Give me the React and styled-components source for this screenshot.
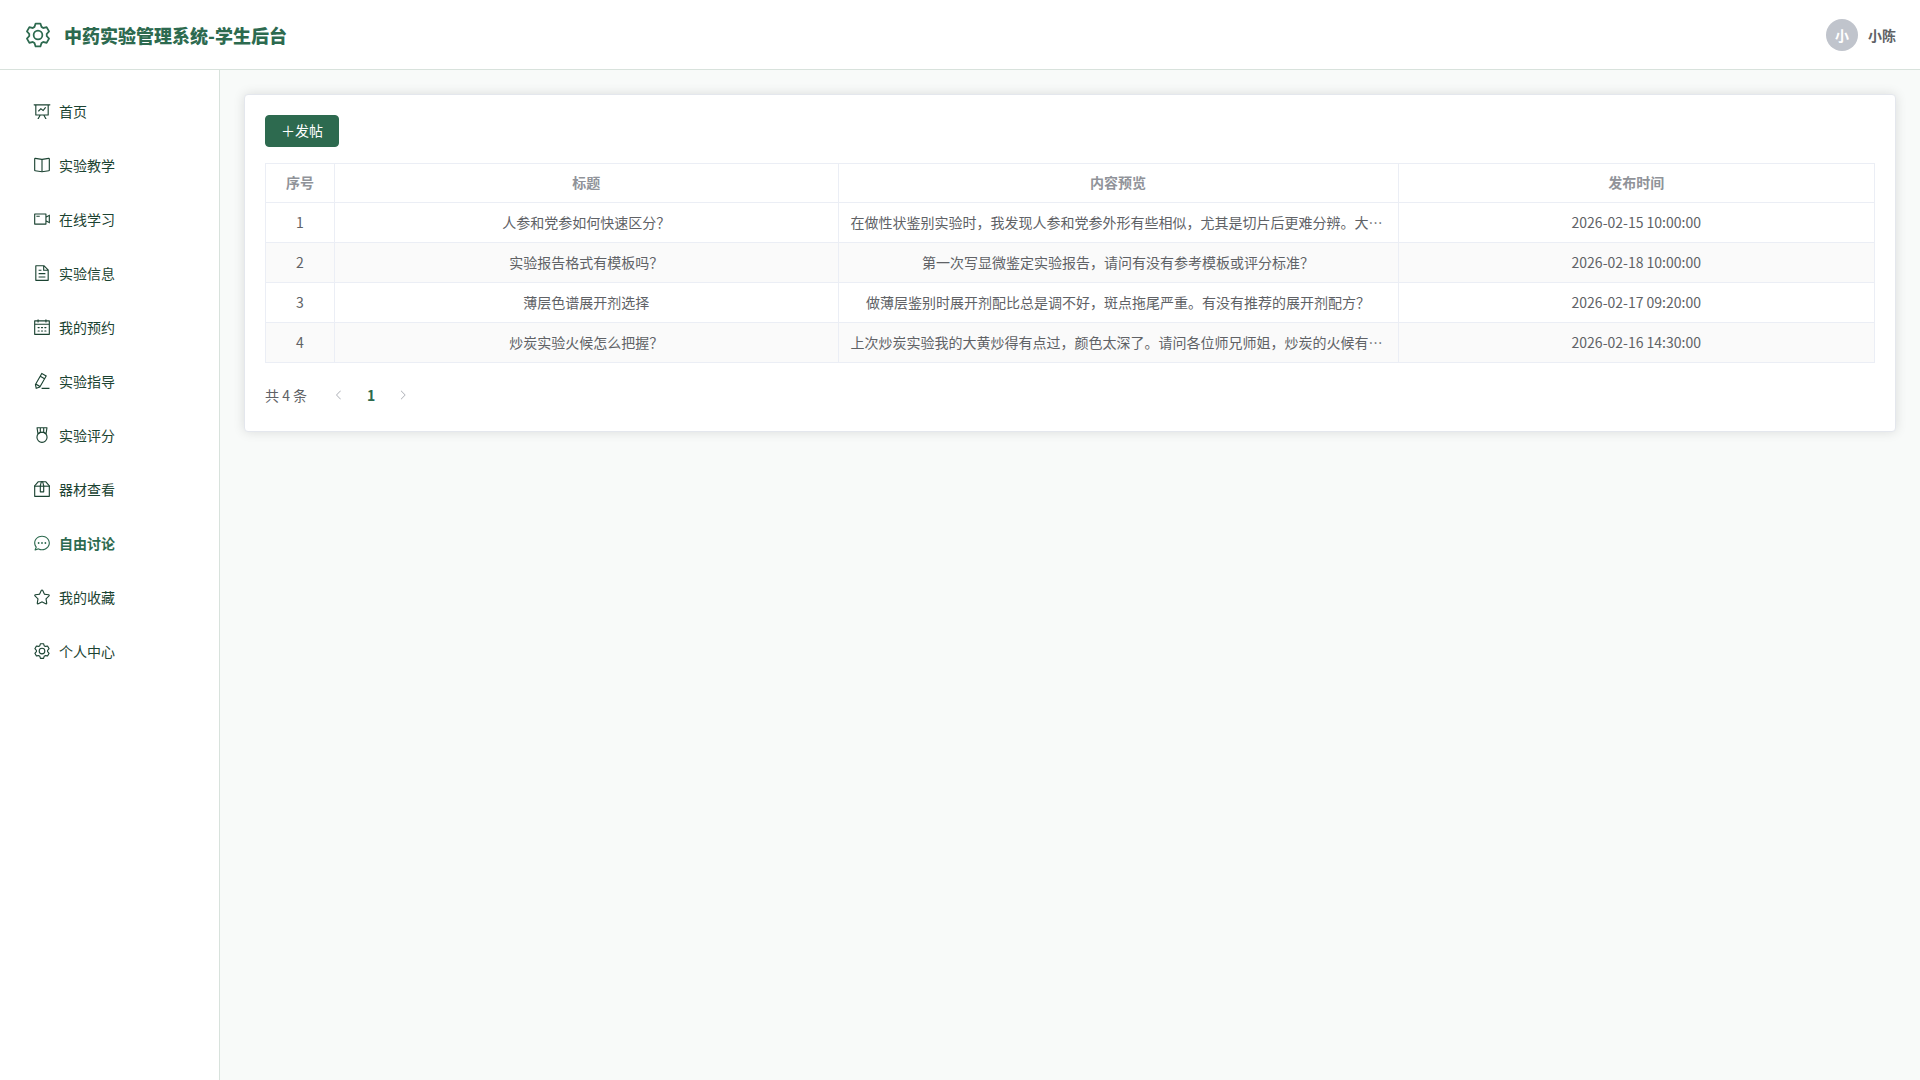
import React from 'react';
import styled, { createGlobalStyle } from 'styled-components';

const GlobalStyle = createGlobalStyle`
  *, *::before, *::after { box-sizing: border-box; }
  body {
    margin: 0;
    background: #f8faf9;
    color: #606266;
    font-family: "Noto Sans CJK SC", sans-serif;
    font-size: 14px;
  }
`;

const ICONS = {
  setting: [
    'M600.704 64a32 32 0 0 1 30.464 22.208l35.2 109.376c14.784 7.232 28.928 15.36 42.432 24.512l112.384-24.192a32 32 0 0 1 34.432 15.36L944.32 364.8a32 32 0 0 1-4.032 37.504l-77.12 85.12a357.12 357.12 0 0 1 0 49.024l77.12 85.248a32 32 0 0 1 4.032 37.504l-88.704 153.6a32 32 0 0 1-34.432 15.296L708.8 803.904c-13.44 9.088-27.648 17.28-42.368 24.512l-35.264 109.376A32 32 0 0 1 600.704 960H423.296a32 32 0 0 1-30.464-22.208L357.696 828.48a351.616 351.616 0 0 1-42.56-24.64l-112.32 24.256a32 32 0 0 1-34.432-15.36L79.68 659.2a32 32 0 0 1 4.032-37.504l77.12-85.248a357.12 357.12 0 0 1 0-48.896l-77.12-85.248A32 32 0 0 1 79.68 364.8l88.704-153.6a32 32 0 0 1 34.432-15.296l112.32 24.256c13.568-9.152 27.776-17.408 42.56-24.64l35.2-109.312A32 32 0 0 1 423.232 64H600.64zm-23.424 64H446.72l-36.352 113.088-24.512 11.968a294.113 294.113 0 0 0-34.816 20.096l-22.656 15.36-116.224-25.088-65.28 113.152 79.68 88.192-1.92 27.136a293.12 293.12 0 0 0 0 40.192l1.92 27.136-79.808 88.192 65.344 113.152 116.224-25.024 22.656 15.296a294.113 294.113 0 0 0 34.816 20.096l24.512 11.968L446.72 896h130.688l36.48-113.152 24.448-11.904a288.282 288.282 0 0 0 34.752-20.096l22.592-15.296 116.288 25.024 65.28-113.152-79.744-88.192 1.92-27.136a293.12 293.12 0 0 0 0-40.256l-1.92-27.136 79.808-88.128-65.344-113.152-116.288 24.96-22.592-15.232a287.616 287.616 0 0 0-34.752-20.096l-24.448-11.904L577.344 128zM512 320a192 192 0 1 1 0 384 192 192 0 0 1 0-384m0 64a128 128 0 1 0 0 256 128 128 0 0 0 0-256',
  ],
  dataLine: [
    'M359.168 768H160a32 32 0 0 1-32-32V192H64a32 32 0 0 1 0-64h896a32 32 0 1 1 0 64h-64v544a32 32 0 0 1-32 32H665.216l110.848 192h-73.856L591.36 768H433.024L322.176 960H248.32zM832 192H192v512h640zM342.656 534.656a32 32 0 1 1-45.312-45.312L444.992 341.76l125.44 94.08L679.04 300.032a32 32 0 1 1 49.92 39.936L581.632 524.224 451.008 426.24 342.656 534.592z',
  ],
  reading: [
    'm512 863.36 384-54.848v-638.72L525.568 222.72a96 96 0 0 1-27.136 0L128 169.792v638.72zM137.024 106.432l370.432 52.928a32 32 0 0 0 9.088 0l370.432-52.928A64 64 0 0 1 960 169.792v638.72a64 64 0 0 1-54.976 63.36l-388.48 55.488a32 32 0 0 1-9.088 0l-388.48-55.488A64 64 0 0 1 64 808.512v-638.72a64 64 0 0 1 73.024-63.36z',
    'M480 192h64v704h-64z',
  ],
  video: [
    'M704 768V256H128v512zm64-416 192-96v512l-192-96v128a32 32 0 0 1-32 32H96a32 32 0 0 1-32-32V224a32 32 0 0 1 32-32h640a32 32 0 0 1 32 32zm0 71.552v176.896l128 64V359.552zM192 320h192v64H192z',
  ],
  document: [
    'M832 384H576V128H192v768h640zm-26.496-64L640 154.496V320zM160 64h480l256 256v608a32 32 0 0 1-32 32H160a32 32 0 0 1-32-32V96a32 32 0 0 1 32-32m160 448h384v64H320zm0-192h160v64H320zm0 384h384v64H320z',
  ],
  calendar: [
    'M128 384v512h768V192H768v32a32 32 0 1 1-64 0v-32H320v32a32 32 0 0 1-64 0v-32H128v128h768v64zm192-256h384V96a32 32 0 1 1 64 0v32h160a32 32 0 0 1 32 32v768a32 32 0 0 1-32 32H96a32 32 0 0 1-32-32V160a32 32 0 0 1 32-32h160V96a32 32 0 0 1 64 0zm-32 384h64a32 32 0 0 1 0 64h-64a32 32 0 0 1 0-64m0 192h64a32 32 0 1 1 0 64h-64a32 32 0 1 1 0-64m192-192h64a32 32 0 0 1 0 64h-64a32 32 0 0 1 0-64m0 192h64a32 32 0 1 1 0 64h-64a32 32 0 1 1 0-64m192-192h64a32 32 0 1 1 0 64h-64a32 32 0 1 1 0-64m0 192h64a32 32 0 1 1 0 64h-64a32 32 0 1 1 0-64',
  ],
  editPen: [
    'm199.04 672.64 193.984 112 224-387.968-193.92-112-224 388.032zm-23.872 60.16 32.896 148.288 144.896-45.696zM455.04 229.248l193.92 112 56.704-98.112-193.984-112-56.64 98.112zM104.32 708.8l384-665.024 304.768 175.936L409.152 884.8h.064l-248.448 78.336zm384 254.272v-64h448v64z',
  ],
  medal: [
    'M512 896a256 256 0 1 0 0-512 256 256 0 0 0 0 512m0 64a320 320 0 1 1 0-640 320 320 0 0 1 0 640',
    'M576 128H448v200a286.72 286.72 0 0 1 64-8c19.52 0 40.832 2.688 64 8zm64 0v219.648c24.448 9.088 50.56 20.416 78.4 33.92L757.44 128zm-256 0H266.624l39.04 253.568c27.84-13.504 53.888-24.832 78.336-33.92V128zM229.312 64h565.376a32 32 0 0 1 31.616 36.864L768 480c-113.792-64-199.104-96-256-96-56.896 0-142.208 32-256 96l-58.304-379.136A32 32 0 0 1 229.312 64',
  ],
  box: [
    'M317.056 128 128 344.064V896h768V344.064L706.944 128zm-14.528-64h418.944a32 32 0 0 1 24.064 10.88l206.528 236.096A32 32 0 0 1 960 332.032V928a32 32 0 0 1-32 32H96a32 32 0 0 1-32-32V332.032a32 32 0 0 1 7.936-21.12L278.4 75.008A32 32 0 0 1 302.528 64z',
    'M64 320h896v64H64z',
    'M448 327.872V640h128V327.872L526.08 128h-28.16zM448 64h128l64 256v352a32 32 0 0 1-32 32H416a32 32 0 0 1-32-32V320z',
  ],
  chat: [
    'm174.72 855.68 135.296-45.12 23.68 11.84C388.096 849.536 448.576 864 512 864c211.84 0 384-166.784 384-352S723.84 160 512 160 128 326.784 128 512c0 69.12 24.96 139.264 70.848 199.232l22.08 28.8-46.272 115.584zm-45.248 82.56A32 32 0 0 1 89.6 896l58.368-145.92C94.72 680.32 64 596.864 64 512 64 299.904 256 96 512 96s448 203.904 448 416-192 416-448 416a461.056 461.056 0 0 1-206.912-48.384l-175.616 58.56z',
    'M512 563.2a51.2 51.2 0 1 1 0-102.4 51.2 51.2 0 0 1 0 102.4m192 0a51.2 51.2 0 1 1 0-102.4 51.2 51.2 0 0 1 0 102.4m-384 0a51.2 51.2 0 1 1 0-102.4 51.2 51.2 0 0 1 0 102.4',
  ],
  star: [
    'm512 747.84 228.16 119.936a6.4 6.4 0 0 0 9.28-6.72l-43.52-254.08 184.512-179.904a6.4 6.4 0 0 0-3.52-10.88l-255.104-37.12L517.76 147.904a6.4 6.4 0 0 0-11.52 0L392.192 379.072l-255.104 37.12a6.4 6.4 0 0 0-3.52 10.88L318.08 606.976l-43.584 254.08a6.4 6.4 0 0 0 9.28 6.72zM313.6 924.48a70.4 70.4 0 0 1-102.144-74.24l37.888-220.928L88.96 472.96A70.4 70.4 0 0 1 128 352.896l221.76-32.256 99.2-200.96a70.4 70.4 0 0 1 126.208 0l99.2 200.96 221.824 32.256a70.4 70.4 0 0 1 39.04 120.064L774.72 629.376l37.888 220.928a70.4 70.4 0 0 1-102.144 74.24L512 820.096l-198.4 104.32z',
  ],
  arrowLeft: [
    'M609.408 149.376 277.76 489.6a32 32 0 0 0 0 44.672l331.648 340.352a29.12 29.12 0 0 0 41.728 0 30.592 30.592 0 0 0 0-42.752L339.264 511.936l311.872-319.872a30.592 30.592 0 0 0 0-42.688 29.12 29.12 0 0 0-41.728 0z',
  ],
  arrowRight: [
    'M340.864 149.312a30.592 30.592 0 0 0 0 42.752L652.736 512 340.864 831.872a30.592 30.592 0 0 0 0 42.752 29.12 29.12 0 0 0 41.728 0L714.24 534.336a32 32 0 0 0 0-44.672L382.592 149.376a29.12 29.12 0 0 0-41.728 0z',
  ],
};

const Svg = styled.svg`
  display: block;
  flex: none;
  fill: currentColor;
`;

function Icon({ name, size }) {
  return (
    <Svg viewBox="0 0 1024 1024" width={size} height={size} aria-hidden="true">
      {ICONS[name].map((d) => <path key={d} d={d} />)}
    </Svg>
  );
}

const Page = styled.div`
  display: flex;
  flex-direction: column;
  min-height: 100vh;
`;

const Header = styled.header`
  display: flex;
  align-items: center;
  justify-content: space-between;
  height: 70px;
  padding: 0 24px;
  background: #fff;
  border-bottom: 1px solid #d8e2dc;
`;

const Brand = styled.div`
  display: flex;
  align-items: center;
  gap: 12px;
  color: #2d6a4f;
`;

const BrandName = styled.h1`
  margin: 0;
  font-size: 18px;
  line-height: 26px;
  font-weight: 900;
`;

const User = styled.div`
  display: flex;
  align-items: center;
  gap: 10px;
  font-weight: 700;
`;

const Avatar = styled.span`
  display: flex;
  align-items: center;
  justify-content: center;
  width: 32px;
  height: 32px;
  border-radius: 50%;
  background: #c0c4cc;
  color: #fff;
`;

const Body = styled.div`
  display: flex;
  flex: 1;
`;

const Sidebar = styled.nav`
  flex: none;
  width: 220px;
  padding: 16px 12px;
  background: #fff;
  border-right: 1px solid #d8e2dc;
`;

const Menu = styled.ul`
  display: flex;
  flex-direction: column;
  gap: 4px;
  margin: 0;
  padding: 0;
  list-style: none;
`;

const MenuLink = styled.a`
  display: flex;
  align-items: center;
  gap: 8px;
  height: 50px;
  padding: 0 21px;
  color: ${(p) => (p.$active ? '#2d6a4f' : '#1b4332')};
  font-weight: ${(p) => (p.$active ? 700 : 400)};
  text-decoration: none;
`;

const Main = styled.main`
  flex: 1;
  min-width: 0;
  padding: 24px;
`;

const Card = styled.section`
  display: flex;
  flex-direction: column;
  align-items: flex-start;
  gap: 16px;
  padding: 20px;
  background: #fff;
  border: 1px solid #e4e7ed;
  border-radius: 4px;
  box-shadow: 0 0 12px rgba(0, 0, 0, 0.12);
`;

const PostButton = styled.button`
  height: 32px;
  padding: 0 15px 2px;
  border: 1px solid #2d6a4f;
  border-radius: 4px;
  background: #2d6a4f;
  color: #fff;
  font: inherit;
  line-height: 14px;
  cursor: pointer;
`;

const Table = styled.table`
  width: 100%;
  table-layout: fixed;
  border-collapse: separate;
  border-spacing: 0;
  border: 1px solid #ebeef5;
  border-width: 1px 0 0 1px;
`;

const Col = styled.col`
  width: ${(p) => p.$width};
`;

const cell = `
  border: 1px solid #ebeef5;
  border-width: 0 1px 1px 0;
  line-height: 23px;
  text-align: center;
  overflow: hidden;
  text-overflow: ellipsis;
  white-space: nowrap;
`;

const Th = styled.th`
  ${cell}
  padding: 7px 12px 8px;
  color: #909399;
  font-weight: 700;
`;

const Td = styled.td`
  ${cell}
  padding: 8px 12px;
`;

const Row = styled.tr`
  &:nth-child(even) { background: #fafafa; }
`;

const Pagination = styled.nav`
  display: flex;
  align-items: center;
`;

const Total = styled.span`
  margin-right: 16px;
`;

const PageButton = styled.button`
  display: flex;
  align-items: center;
  justify-content: center;
  min-width: 32px;
  height: 32px;
  padding: 0 4px;
  border: 0;
  background: transparent;
  color: ${(p) => (p.$current ? '#2d6a4f' : '#a8abb2')};
  font: inherit;
  font-weight: 700;
`;

const MENU = [
  ['首页', 'dataLine'],
  ['实验教学', 'reading'],
  ['在线学习', 'video'],
  ['实验信息', 'document'],
  ['我的预约', 'calendar'],
  ['实验指导', 'editPen'],
  ['实验评分', 'medal'],
  ['器材查看', 'box'],
  ['自由讨论', 'chat'],
  ['我的收藏', 'star'],
  ['个人中心', 'setting'],
];

const POSTS = [
  ['人参和党参如何快速区分？', '在做性状鉴别实验时，我发现人参和党参外形有些相似，尤其是切片后更难分辨。大家有什么好方法吗？', '2026-02-15 10:00:00'],
  ['实验报告格式有模板吗？', '第一次写显微鉴定实验报告，请问有没有参考模板或评分标准？', '2026-02-18 10:00:00'],
  ['薄层色谱展开剂选择', '做薄层鉴别时展开剂配比总是调不好，斑点拖尾严重。有没有推荐的展开剂配方？', '2026-02-17 09:20:00'],
  ['炒炭实验火候怎么把握？', '上次炒炭实验我的大黄炒得有点过，颜色太深了。请问各位师兄师姐，炒炭的火候有什么技巧？', '2026-02-16 14:30:00'],
];

export default function App() {
  return (
    <Page lang="zh-CN">
      <GlobalStyle />
      <Header>
        <Brand>
          <Icon name="setting" size={28} />
          <BrandName>中药实验管理系统-学生后台</BrandName>
        </Brand>
        <User>
          <Avatar>小</Avatar>
          <span>小陈</span>
        </User>
      </Header>
      <Body>
        <Sidebar aria-label="主菜单">
          <Menu>
            {MENU.map(([label, icon]) => (
              <li key={label}>
                <MenuLink href="#" $active={label === '自由讨论'}>
                  <Icon name={icon} size={18} />
                  <span>{label}</span>
                </MenuLink>
              </li>
            ))}
          </Menu>
        </Sidebar>
        <Main>
          <Card>
            <PostButton type="button">＋发帖</PostButton>
            <Table>
              <colgroup>
                <Col $width="69px" />
                <Col $width="31.3%" />
                <Col $width="34.8%" />
                <Col $width="auto" />
              </colgroup>
              <thead>
                <tr>
                  <Th scope="col">序号</Th>
                  <Th scope="col">标题</Th>
                  <Th scope="col">内容预览</Th>
                  <Th scope="col">发布时间</Th>
                </tr>
              </thead>
              <tbody>
                {POSTS.map(([title, preview, time], i) => (
                  <Row key={title}>
                    <Td>{i + 1}</Td>
                    <Td>{title}</Td>
                    <Td>{preview}</Td>
                    <Td>{time}</Td>
                  </Row>
                ))}
              </tbody>
            </Table>
            <Pagination aria-label="分页">
              <Total>共 4 条</Total>
              <PageButton type="button" aria-label="上一页" disabled>
                <Icon name="arrowLeft" size={12} />
              </PageButton>
              <PageButton type="button" aria-current="page" $current>1</PageButton>
              <PageButton type="button" aria-label="下一页" disabled>
                <Icon name="arrowRight" size={12} />
              </PageButton>
            </Pagination>
          </Card>
        </Main>
      </Body>
    </Page>
  );
}
